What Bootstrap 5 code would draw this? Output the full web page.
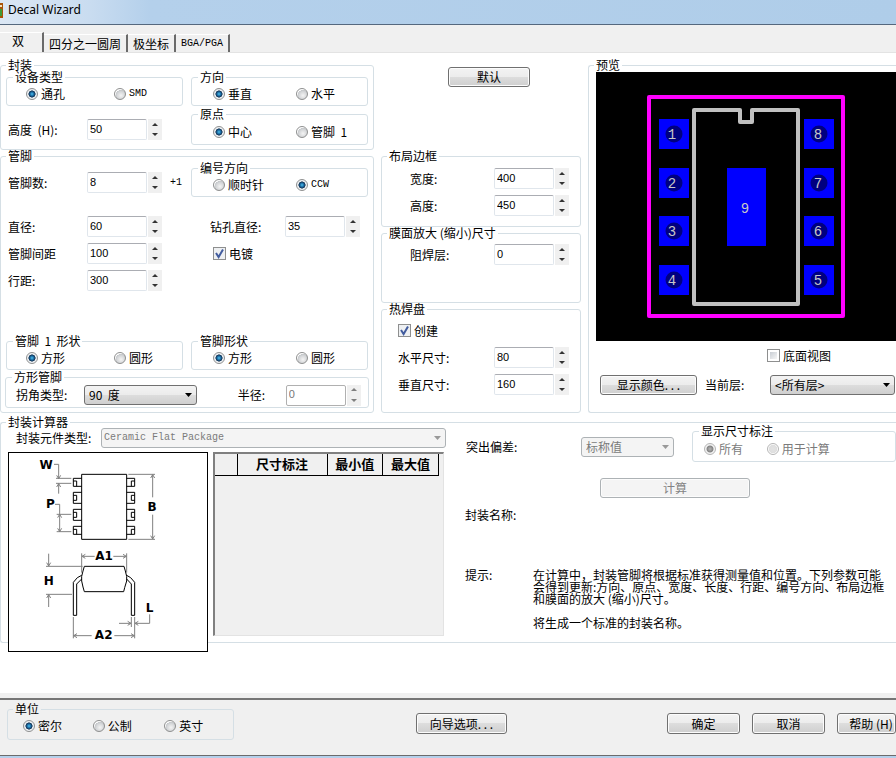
<!DOCTYPE html>
<html lang="zh-CN">
<head>
<meta charset="utf-8">
<meta name="viewport" content="width=device-width, initial-scale=1">
<title>Decal Wizard</title>
<link href="https://cdn.jsdelivr.net/npm/bootstrap@5.3.0/dist/css/bootstrap.min.css" rel="stylesheet">
<style>
:root { --face: #f0f0f0; --line: #d5dfe5; }
body { font: 12px/12px "Noto Sans CJK SC", sans-serif; color: #000; background: #fff; overflow-x: hidden; }
.mono { font-family: "Liberation Mono", monospace; font-size: 10px; }
.titlebar { height: 25px; padding: 3px 0 0; background: linear-gradient(90deg, #dbe7f4 0, #c9dcf0 90px, #b4d0eb 150px, #afcde9 100%); border-bottom: 1px solid #55687e; font: 12px/13px "Noto Sans", sans-serif; }
.app-icon { width: 3px; height: 15px; margin-right: 5px; }
.tabstrip { height: 28px; background: var(--face); border-bottom: 1px solid #e3e3e3; }
.tabstrip .nav-link { height: 18px; padding: 0 5px; margin: 0; border: 0; border-top: 1px solid #fff; border-right: 2px solid #6a6a6a; border-radius: 0; color: #000; line-height: 14px; background: var(--face); white-space: nowrap; }
.tabstrip .nav-link.active { height: 20px; padding: 0 18px 3px 12px; color: #000; background: var(--face); }

/* group boxes */
.group { border: 1px solid var(--line); border-radius: 3px; margin: 0; padding: 0; }
.group > legend { float: none; width: auto; margin: 0 0 0 5px; padding: 0 2px; font-size: 12px; line-height: 12px; white-space: nowrap; }
.group .group > legend { margin-left: 6px; }
.open-end { border-right: 0; border-top-right-radius: 0; border-bottom-right-radius: 0; }

.upper { display: grid; grid-template-columns: 374fr 200fr 308fr; column-gap: 7px; padding-top: 6px; }
.halves { display: grid; grid-template-columns: 1fr 1fr; column-gap: 8px; padding: 0 5px; }
.origin-row { margin-top: 2px; }
.shape-row { margin-top: 41px; }
.radios { display: grid; grid-template-columns: 88fr 68fr; align-items: center; height: 22px; padding-left: 19px; }
.radios.alt { grid-template-columns: 83fr 71fr; padding-left: 21px; }
.origin-row .radios { height: 24px; }
.line27 { display: flex; align-items: center; height: 27px; }
.drop6 { padding-top: 6px; }
.lab { flex: 0 0 81px; padding-left: 2px; white-space: nowrap; }
.lab-drill { flex: 0 0 94px; padding-left: 19px; white-space: nowrap; }
.lab-mid { flex: 0 0 112px; padding-left: 28px; white-space: nowrap; }
.lab-mid.wide { padding-left: 16px; }
.corner-box { padding: 1px 4px 0; }
.corner-row { display: grid; grid-template-columns: 76px 113fr 40fr 48px 82fr; align-items: center; height: 24px; padding-left: 2px; }
.corner-row .lab { padding-left: 8px; }
.default-area { height: 91px; padding: 8px 0 0 67px; }
.default-area .push { width: 82px; }
.frame-box { height: 77px; padding-top: 1px; }
.frame-box > div:nth-of-type(1), .mask-box .line27, .thermal-box > div:nth-of-type(1) { margin-top: 2px; }
.mask-box { height: 76px; }

/* spin boxes */
.spin { display: flex; gap: 1px; height: 21px; }
.spin input { width: 60px; height: 21px; padding: 0 3px 2px 2px; font: 11px/16px "Liberation Sans", sans-serif; color: #000; background: #fff; border: 1px solid #e0e6ec; border-top-color: #abadb3; border-radius: 2px; }
.spin input:disabled { color: #777; border-color: #b0b0b0; }
.spin .arrows { display: flex; flex-direction: column; width: 14px; background: var(--face); }
.spin button { flex: 1; padding: 0; border: 0; background: none; display: flex; justify-content: center; align-items: center; }
.spin button::before { content: ""; border: 3px solid transparent; border-top-width: 0; border-bottom-color: #333; }
.spin button.down::before { border-width: 3px 3px 0; border-top-color: #333; }
.spin button:disabled::before { opacity: .6; }

/* radios and tick boxes */
.pick { display: inline-flex; align-items: center; gap: 3px; white-space: nowrap; }
.pick input { appearance: none; flex: none; margin: 0; width: 12px; height: 12px; }
.pick input[type=radio] { border: 1px solid #8e8f8f; border-radius: 50%; background: radial-gradient(circle at 60% 65%, #f4f4f4 0, #d4d6d8 45%, #c4c7ca 60%, #fff 64%); }
.pick input[type=radio]:checked { background: radial-gradient(circle at 50% 50%, #4fc3ee 0, #1c6fa8 25%, #13304f 46%, #e8ecf0 54%, #fff 100%); }
.pick input[type=radio]:disabled { border-color: #b5b5b5; background: radial-gradient(circle, #e2e2e2 0, #dedede 55%, #fff 65%); }
.pick input[type=radio]:disabled:checked { background: radial-gradient(circle, #b5b5b5 0, #848484 42%, #f2f2f2 56%); }
.pick input[type=checkbox] { width: 13px; height: 13px; border: 1px solid #8e8f8f; padding: 2px; background: linear-gradient(135deg, #c9ced4, #f6f6f6) content-box #fff; }
.pick input[type=checkbox]:checked { padding: 0; background: url("data:image/svg+xml,%3Csvg xmlns='http://www.w3.org/2000/svg' viewBox='0 0 11 11'%3E%3Cpath d='M2 5l2.6 4L9 1.6' fill='none' stroke='%23425c9e' stroke-width='2'/%3E%3C/svg%3E") center/11px, #eef0f2; }
.off { color: #7b7b7b; }
.tick-drill { padding-left: 22px; }

/* buttons and drop-downs */
.push { height: 20px; padding: 0; font-size: 12px; line-height: 16px; color: #000; border: 1px solid #707070; border-radius: 3px; background: linear-gradient(#f3f3f3, #ececec 50%, #dddddd 50%, #cfcfcf); box-shadow: inset 0 0 0 1px #fcfcfc; white-space: nowrap; }
.push:disabled { color: #838383; border-color: #adb2b5; background: #f4f4f4; }
.drop { appearance: none; width: 100%; height: 20px; padding: 0 14px 0 4px; font-size: 12px; line-height: 16px; color: #000; border: 1px solid #707070; border-radius: 3px; background: url("data:image/svg+xml,%3Csvg xmlns='http://www.w3.org/2000/svg' width='7' height='4'%3E%3Cpath d='M0 0h7L3.5 4z'/%3E%3C/svg%3E") right 4px center no-repeat, linear-gradient(#f3f3f3, #ebebeb 50%, #dddddd 50%, #cfcfcf); }
.drop:disabled { opacity: 1; color: #7b7b7b; border-color: #adb2b5; background: url("data:image/svg+xml,%3Csvg xmlns='http://www.w3.org/2000/svg' width='7' height='4'%3E%3Cpath d='M0 0h7L3.5 4z' fill='%23999'/%3E%3C/svg%3E") right 4px center no-repeat, #f4f4f4; }
.drop.mono { font-size: 10px; padding-left: 2px; }

/* preview */
.preview-in { padding: 1px 0 0 7px; }
.board { display: block; width: 100%; height: 269px; background: #000; }
.board text { font: 14px "Liberation Mono", monospace; fill: #c8c8c8; text-anchor: middle; }
.bottom-view { display: flex; justify-content: flex-end; padding: 8px 65px 0 0; }
.layer-row { display: grid; grid-template-columns: 97fr 57fr 125fr; column-gap: 8px; align-items: center; padding: 13px 1px 0 4px; }

/* calculator */
.calc-box { margin-top: 3px; }
.calc { display: grid; grid-template-columns: 446fr 449fr; }
.type-row { display: grid; grid-template-columns: 85px 1fr; align-items: center; padding: 0 1px 0 15px; }
.views { display: flex; gap: 5px; padding: 4px 3px 0 7px; }
.sketch { flex: none; width: 200px; height: 200px; margin-bottom: -10px; background: #fff; border: 1px solid #000; }
.sketch text { font: bold 36px "DejaVu Sans", sans-serif; text-anchor: middle; }
.sheet { flex: 1; height: 184px; background: var(--face); border: 1px solid #e3e3e3; border-top: 2px solid #808080; border-left: 2px solid #808080; }
.sheet table { width: 224px; table-layout: fixed; border-collapse: collapse; }
.sheet th { height: 21px; padding: 0; font-size: 13px; line-height: 18px; text-align: center; border-right: 1px solid #000; border-bottom: 1px solid #000; }
.sheet .c-no { width: 22px; }
.sheet .c-name { width: 90px; }
.calc-right { padding-left: 18px; margin-top: -3px; }
.dev-row { display: grid; grid-template-columns: 116fr 93fr 222fr; align-items: center; }
.dev-row .drop { margin-top: 6px; }
.dev-row .dev-label { padding: 6px 0 0 1px; }
.dev-row .group { margin-left: 18px; }
.dim-radios { display: grid; grid-template-columns: 63fr 129fr; align-items: center; height: 24px; padding-left: 11px; }
.compute-row { padding: 16px 0 0 135px; }
.compute-row .push { width: 150px; }
.name-row { padding-top: 11px; }
.hint-row { padding-top: 48px; }
.hint-label { flex: 0 0 68px; }

/* footer */
.footer-bar { border-top: 5px solid var(--face); }
.footer-in { background: var(--face); border-top: 2px solid #767676; border-bottom: 1px solid #6b6b6b; height: 58px; padding: 3px 0 0 7px; }
.base { height: 2px; background: #b4d0eb; }
.units { width: 227px; padding-bottom: 3px; }
.unit-radios { display: grid; grid-template-columns: 70fr 72fr 69fr; align-items: center; height: 21px; padding-left: 15px; }
.footer-in .push { height: 21px; width: 73px; margin-top: 10px; }
.footer-in .push.wizard { width: 91px; margin-left: 182px; }
.footer-in .push.help { width: 59px; padding-left: 9px; }
</style>
<script src="https://cdn.jsdelivr.net/npm/bootstrap@5.3.0/dist/js/bootstrap.bundle.min.js"></script>
</head>
<body class="d-flex flex-column min-vh-100">
<header class="titlebar d-flex">
  <svg class="app-icon" viewBox="0 0 3 15" aria-hidden="true"><path fill="#a85408" d="M0 0h3v15H0z"/><path fill="#f3e3c0" d="M0 2h2v2H0z"/><path fill="#3f9a35" d="M0 6h2v7H0z"/></svg>
  <span>Decal Wizard</span>
</header>

<nav class="tabstrip d-flex align-items-end" role="tablist" aria-label="封装向导">
  <button type="button" class="nav-link active" role="tab" aria-selected="true">双</button>
  <button type="button" class="nav-link" role="tab" aria-selected="false">四分之一圆周</button>
  <button type="button" class="nav-link" role="tab" aria-selected="false">极坐标</button>
  <button type="button" class="nav-link mono" role="tab" aria-selected="false">BGA/PGA</button>
</nav>

<main class="flex-grow-1">
  <div class="upper">
    <div class="d-flex flex-column">
      <fieldset class="group pb-1">
        <legend>封装</legend>
        <div class="halves">
          <fieldset class="group">
            <legend>设备类型</legend>
            <div class="radios">
              <label class="pick"><input type="radio" name="device" checked>通孔</label>
              <label class="pick"><input type="radio" name="device"><span class="mono">SMD</span></label>
            </div>
          </fieldset>
          <fieldset class="group">
            <legend>方向</legend>
            <div class="radios alt">
              <label class="pick"><input type="radio" name="orient" checked>垂直</label>
              <label class="pick"><input type="radio" name="orient">水平</label>
            </div>
          </fieldset>
        </div>
        <div class="halves origin-row">
          <div class="d-flex align-items-center drop6">
            <label class="lab" for="height">高度&nbsp; (H):</label>
            <div class="spin"><input id="height" type="text" value="50"><span class="arrows"><button type="button" class="up" aria-label="增加"></button><button type="button" class="down" aria-label="减少"></button></span></div>
          </div>
          <fieldset class="group">
            <legend>原点</legend>
            <div class="radios alt">
              <label class="pick"><input type="radio" name="origin" checked>中心</label>
              <label class="pick"><input type="radio" name="origin">管脚&nbsp; 1</label>
            </div>
          </fieldset>
        </div>
      </fieldset>

      <fieldset class="group pb-1 flex-grow-1">
        <legend>管脚</legend>
        <div class="halves">
          <div class="d-flex align-items-center drop6">
            <label class="lab" for="pins">管脚数:</label>
            <div class="spin"><input id="pins" type="text" value="8"><span class="arrows"><button type="button" class="up" aria-label="增加"></button><button type="button" class="down" aria-label="减少"></button></span></div>
            <span class="mono ms-2">+1</span>
          </div>
          <fieldset class="group">
            <legend>编号方向</legend>
            <div class="radios alt">
              <label class="pick"><input type="radio" name="numbering">顺时针</label>
              <label class="pick"><input type="radio" name="numbering" checked><span class="mono">CCW</span></label>
            </div>
          </fieldset>
        </div>
        <div class="halves mt-3">
          <div>
            <div class="line27">
              <label class="lab" for="dia">直径:</label>
              <div class="spin"><input id="dia" type="text" value="60"><span class="arrows"><button type="button" class="up" aria-label="增加"></button><button type="button" class="down" aria-label="减少"></button></span></div>
            </div>
            <div class="line27">
              <label class="lab" for="pitch">管脚间距</label>
              <div class="spin"><input id="pitch" type="text" value="100"><span class="arrows"><button type="button" class="up" aria-label="增加"></button><button type="button" class="down" aria-label="减少"></button></span></div>
            </div>
            <div class="line27">
              <label class="lab" for="rowpitch">行距:</label>
              <div class="spin"><input id="rowpitch" type="text" value="300"><span class="arrows"><button type="button" class="up" aria-label="增加"></button><button type="button" class="down" aria-label="减少"></button></span></div>
            </div>
          </div>
          <div>
            <div class="line27">
              <label class="lab-drill" for="drill">钻孔直径:</label>
              <div class="spin"><input id="drill" type="text" value="35"><span class="arrows"><button type="button" class="up" aria-label="增加"></button><button type="button" class="down" aria-label="减少"></button></span></div>
            </div>
            <div class="line27 tick-drill"><label class="pick"><input type="checkbox" checked>电镀</label></div>
          </div>
        </div>
        <div class="halves shape-row">
          <fieldset class="group">
            <legend>管脚&nbsp; 1&nbsp; 形状</legend>
            <div class="radios">
              <label class="pick"><input type="radio" name="pin1" checked>方形</label>
              <label class="pick"><input type="radio" name="pin1">圆形</label>
            </div>
          </fieldset>
          <fieldset class="group">
            <legend>管脚形状</legend>
            <div class="radios alt">
              <label class="pick"><input type="radio" name="pinshape" checked>方形</label>
              <label class="pick"><input type="radio" name="pinshape">圆形</label>
            </div>
          </fieldset>
        </div>
        <div class="corner-box">
          <fieldset class="group">
            <legend>方形管脚</legend>
            <div class="corner-row">
              <label class="lab" for="corner">拐角类型:</label>
              <select id="corner" class="drop"><option>90&nbsp; 度</option></select>
              <span></span>
              <label for="radius">半径:</label>
              <div class="spin"><input id="radius" type="text" value="0" disabled><span class="arrows"><button type="button" class="up" aria-label="增加" disabled></button><button type="button" class="down" aria-label="减少" disabled></button></span></div>
            </div>
          </fieldset>
        </div>
      </fieldset>
    </div>

    <div class="d-flex flex-column">
      <div class="default-area"><button type="button" class="push">默认</button></div>
      <fieldset class="group frame-box">
        <legend>布局边框</legend>
        <div class="line27"><label class="lab-mid" for="bw">宽度:</label><div class="spin"><input id="bw" type="text" value="400"><span class="arrows"><button type="button" class="up" aria-label="增加"></button><button type="button" class="down" aria-label="减少"></button></span></div></div>
        <div class="line27"><label class="lab-mid" for="bh">高度:</label><div class="spin"><input id="bh" type="text" value="450"><span class="arrows"><button type="button" class="up" aria-label="增加"></button><button type="button" class="down" aria-label="减少"></button></span></div></div>
      </fieldset>
      <fieldset class="group mask-box">
        <legend>膜面放大 (缩小)尺寸</legend>
        <div class="line27"><label class="lab-mid" for="mask">阻焊层:</label><div class="spin"><input id="mask" type="text" value="0"><span class="arrows"><button type="button" class="up" aria-label="增加"></button><button type="button" class="down" aria-label="减少"></button></span></div></div>
      </fieldset>
      <fieldset class="group flex-grow-1 thermal-box">
        <legend>热焊盘</legend>
        <div class="line27 ps-3"><label class="pick"><input type="checkbox" checked>创建</label></div>
        <div class="line27"><label class="lab-mid wide" for="th">水平尺寸:</label><div class="spin"><input id="th" type="text" value="80"><span class="arrows"><button type="button" class="up" aria-label="增加"></button><button type="button" class="down" aria-label="减少"></button></span></div></div>
        <div class="line27"><label class="lab-mid wide" for="tv">垂直尺寸:</label><div class="spin"><input id="tv" type="text" value="160"><span class="arrows"><button type="button" class="up" aria-label="增加"></button><button type="button" class="down" aria-label="减少"></button></span></div></div>
      </fieldset>
    </div>

    <fieldset class="group open-end">
      <legend>预览</legend>
      <div class="preview-in">
        <svg class="board" viewBox="0 0 300 269" role="img" aria-label="封装预览">
          <rect x="53" y="25" width="194" height="219" fill="none" stroke="#f0f" stroke-width="4" stroke-linejoin="round"/>
          <path d="M98 38H144V50H156V38H202V232H98Z" fill="none" stroke="#c0c0c0" stroke-width="4" stroke-linejoin="round"/>
          <path fill="#00f" d="M63 47h30v30H63zM63 96h30v30H63zM63 144h30v30H63zM63 193h30v30H63zM208 47h30v30h-30zM208 96h30v30h-30zM208 144h30v30h-30zM208 193h30v30h-30zM131 96h39v78h-39z"/>
          <g fill="#000080"><circle cx="78" cy="62" r="8.5"/><circle cx="78" cy="111" r="8.5"/><circle cx="78" cy="159" r="8.5"/><circle cx="78" cy="208" r="8.5"/><circle cx="223" cy="62" r="8.5"/><circle cx="223" cy="111" r="8.5"/><circle cx="223" cy="159" r="8.5"/><circle cx="223" cy="208" r="8.5"/></g>
          <text x="76" y="67">1</text><text x="76" y="116">2</text><text x="76" y="164">3</text><text x="76" y="213">4</text>
          <text x="222" y="213">5</text><text x="222" y="164">6</text><text x="222" y="116">7</text><text x="222" y="67">8</text>
          <text x="149" y="141">9</text>
        </svg>
        <div class="bottom-view"><label class="pick"><input type="checkbox">底面视图</label></div>
        <div class="layer-row">
          <button type="button" class="push">显示颜色. . .</button>
          <label for="layer">当前层:</label>
          <select id="layer" class="drop"><option>&lt;所有层&gt;</option></select>
        </div>
      </div>
    </fieldset>
  </div>

  <fieldset class="group open-end calc-box">
    <legend>封装计算器</legend>
    <div class="calc">
      <div>
        <div class="type-row">
          <label for="ptype">封装元件类型:</label>
          <select id="ptype" class="drop mono" disabled><option>Ceramic Flat Package</option></select>
        </div>
        <div class="views">
          <svg class="sketch" viewBox="27 24 594 594" role="img" aria-label="尺寸示意图">
            <g fill="none" stroke="#000" stroke-width="3">
              <path d="M245 88h135v195H245zM245 100h-25v24h25M245 142h-25v33h25M245 193h-25v33h25M245 244h-25v24h25M380 100h24v24h-24M380 142h24v33h-24M380 193h24v33h-24M380 244h24v24h-24"/>
              <path d="M220 108h10v16M220 151h10v15h-10M220 202h10v15h-10M220 253h10v15M404 108h-10v16M404 151h-10v15h10M404 202h-10v15h10M404 253h-10v15"/>
              <path d="M253 364h119l4 14 4 16v14l-6 20-3 12H253l-4-14-4-18v-14l4-16zM245 391l-13 7-12 14v99h10v-94l15-15M380 391l12 7 12 14v99h-10v-94l-14-15"/>
            </g>
            <g fill="none" stroke="#808080" stroke-width="3">
              <path d="M162 58h14v43M170 91l6 10 6-10M168 100h46M168 115h46M176 146v-30M170 126l6-10 6 10"/>
              <path d="M165 178h14v30M170 208h44M170 260h44M179 208v52M173 218l6-10 6 10M173 250l6 10 6-10"/>
              <path d="M385 88h80M385 283h80M458 89v68M458 209v73M452 99l6-10 6 10M452 272l6 10 6-10"/>
              <path d="M245 325v58M380 325v58M246 334h38M340 334h39M256 328l-10 6 10 6M369 328l10 6-10 6"/>
              <path d="M138 364h110M138 448h78M146 326v37M140 353l6 10 6-10M146 486v-37M140 459l6-10 6 10"/>
              <path d="M220 516v64M404 516v64M394 516v30M221 572h54M343 572h60M231 566l-10 6 10 6M393 566l10 6-10 6"/>
              <path d="M357 535h36M383 529l10 6-10 6M449 508v27h-44M415 529l-10 6 10 6"/>
            </g>
            <text x="138" y="71">W</text><text x="151" y="188">P</text><text x="456" y="198">B</text><text x="312" y="345">A1</text><text x="146" y="420">H</text><text x="449" y="501">L</text><text x="311" y="583">A2</text>
          </svg>
          <div class="sheet">
            <table>
              <thead><tr><th class="c-no" scope="col" aria-label="序号"></th><th class="c-name" scope="col">尺寸标注</th><th scope="col">最小值</th><th scope="col">最大值</th></tr></thead>
            </table>
          </div>
        </div>
      </div>
      <div class="calc-right">
        <div class="dev-row">
          <label class="dev-label" for="dev">突出偏差:</label>
          <select id="dev" class="drop" disabled><option>标称值</option></select>
          <fieldset class="group">
            <legend>显示尺寸标注</legend>
            <div class="dim-radios off">
              <label class="pick"><input type="radio" name="dims" checked disabled>所有</label>
              <label class="pick"><input type="radio" name="dims" disabled>用于计算</label>
            </div>
          </fieldset>
        </div>
        <div class="compute-row"><button type="button" class="push" disabled>计算</button></div>
        <div class="name-row">封装名称:</div>
        <div class="d-flex hint-row">
          <div class="hint-label">提示:</div>
          <div>
            <p class="mb-0">在计算中，封装管脚将根据标准获得测量值和位置。下列参数可能<br>会得到更新:方向、原点、宽度、长度、行距、编号方向、布局边框<br>和膜面的放大 (缩小)尺寸。</p>
            <p class="mb-0 mt-2 pt-1">将生成一个标准的封装名称。</p>
          </div>
        </div>
      </div>
    </div>
  </fieldset>
</main>

<footer class="footer-bar">
  <div class="footer-in d-flex align-items-start">
    <fieldset class="group units">
      <legend>单位</legend>
      <div class="unit-radios">
        <label class="pick"><input type="radio" name="unit" checked>密尔</label>
        <label class="pick"><input type="radio" name="unit">公制</label>
        <label class="pick"><input type="radio" name="unit">英寸</label>
      </div>
    </fieldset>
    <button type="button" class="push wizard">向导选项. . .</button>
    <div class="d-flex ms-auto">
      <button type="button" class="push me-2">确定</button>
      <button type="button" class="push ms-1 me-2">取消</button>
      <button type="button" class="push help open-end ms-1">帮助 (H)</button>
    </div>
  </div>
  <div class="base"></div>
</footer>
</body>
</html>
